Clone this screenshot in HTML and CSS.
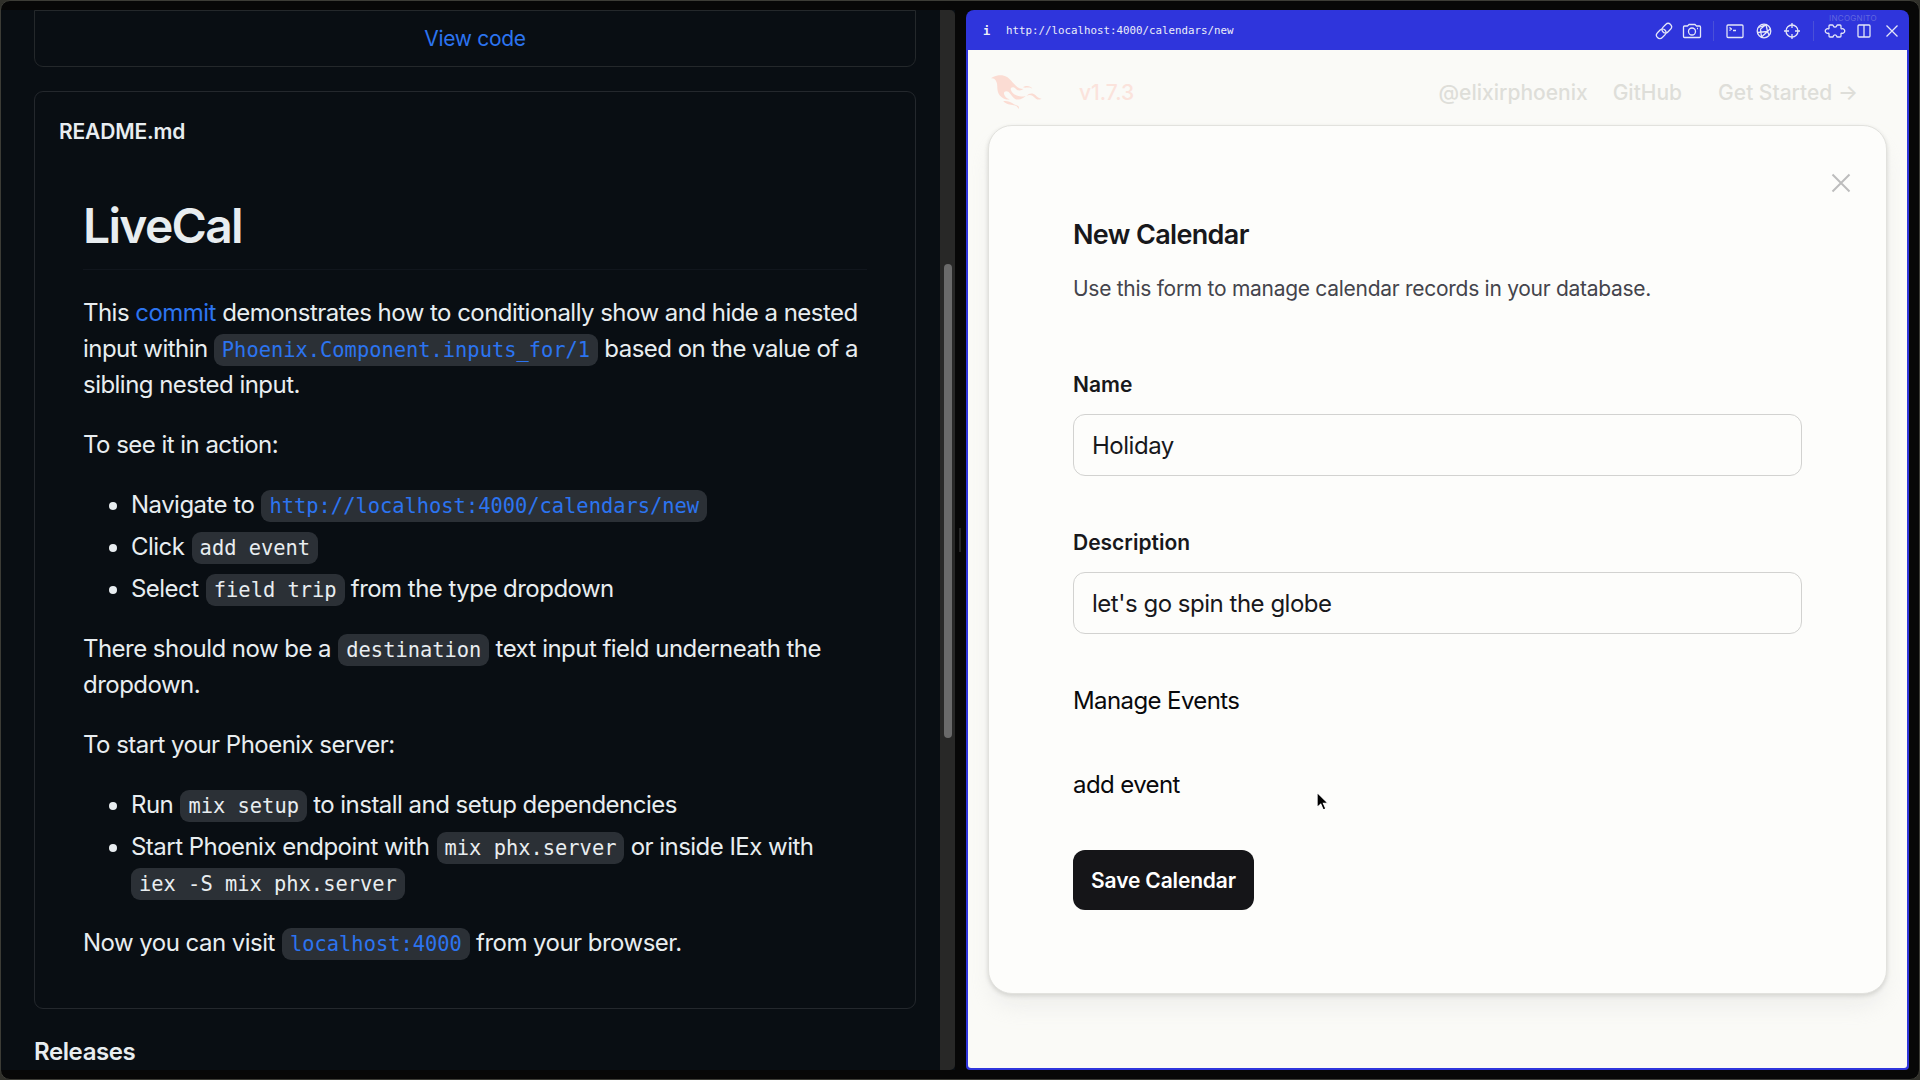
FILE: index.html
```html
<!DOCTYPE html>
<html lang="en">
<head>
<meta charset="utf-8">
<title>LiveCal</title>
<link rel="stylesheet" href="styles.css">
</head>
<body>
<div class="desktop">
  <section class="repo">
    <div class="repo-content">
      <div class="files-box"><a class="link">View code</a></div>
      <article class="readme">
        <h2 class="readme-name">README.md</h2>
        <div class="markdown">
          <h1>LiveCal</h1>
          <p>This <a class="link">commit</a> demonstrates how to conditionally show and hide a nested<br>input within <code class="link">Phoenix.Component.inputs_for/1</code> based on the value of a<br>sibling nested input.</p>
          <p>To see it in action:</p>
          <ul>
            <li>Navigate to <code class="link">http://localhost:4000/calendars/new</code></li>
            <li>Click <code>add event</code></li>
            <li>Select <code>field trip</code> from the type dropdown</li>
          </ul>
          <p>There should now be a <code>destination</code> text input field underneath the<br>dropdown.</p>
          <p>To start your Phoenix server:</p>
          <ul>
            <li>Run <code>mix setup</code> to install and setup dependencies</li>
            <li>Start Phoenix endpoint with <code>mix phx.server</code> or inside IEx with<br><code>iex -S mix phx.server</code></li>
          </ul>
          <p>Now you can visit <code class="link">localhost:4000</code> from your browser.</p>
        </div>
      </article>
      <h2 class="releases">Releases</h2>
    </div>
    <div class="scrollbar"><div class="thumb"></div></div>
  </section>
  <div class="splitter"><i></i></div>
  <section class="browser">
    <header class="toolbar">
      <span class="info">i</span>
      <span class="url">http://localhost:4000/calendars/new</span>
      <span class="incognito">INCOGNITO</span>
      <div class="tools">
        <svg class="icon" viewBox="0 0 20 20"><g transform="rotate(-45 10 10)"><rect x="0.800" y="6.600" width="10.500" height="6.800" rx="3.400"/><rect x="8.700" y="6.600" width="10.500" height="6.800" rx="3.400"/></g></svg>
        <svg class="icon" viewBox="0 0 20 20"><path d="M2.500 5h3l1.500-1.500h6l1.500 1.500h3q1 0 1 1v9.500q0 1-1 1h-15q-1 0-1-1V6q0-1 1-1z"/><circle cx="10" cy="10.500" r="3.500"/><path d="M15 7.500h1"/></svg>
        <i class="rule"></i>
        <svg class="icon" viewBox="0 0 20 20"><rect x="2" y="4" width="16" height="12.500" rx="1"/><path d="M4.500 6.500l2 1.500-2 1.500M8 9.500h3"/></svg>
        <svg class="icon" viewBox="0 0 20 20"><circle cx="10" cy="10" r="6.800"/><path d="M4.500 6.500l7.500-3 1.500 7-6 5.500-1-8M3.500 11.500l10-1 3-3M13.500 10.500l1.500 3.500M12 3.500l-5.500 4.500"/></svg>
        <svg class="icon" viewBox="0 0 20 20"><circle cx="10" cy="10" r="6"/><path d="M10 2v5M10 13v5M2 10h5M13 10h5"/></svg>
        <i class="rule"></i>
        <svg class="icon puzzle" viewBox="0 0 20 20"><path d="M5 4h2.500q.7 0 .9 1a1.700 1.700 0 0 0 3.200 0q.2-1 .9-1H15q1 0 1 1v2.300q0 .6.800.5a2.300 2.300 0 1 1 0 4.400q-.8-.1-.8.500V15q0 1-1 1h-2.500q-.7 0-.9-1a1.700 1.700 0 0 0-3.200 0q-.2 1-.9 1H5q-1 0-1-1v-2.300q0-.6-.8-.5a2.300 2.300 0 1 1 0-4.400q.8.1.8-.5V5q0-1 1-1z"/></svg>
        <svg class="icon" viewBox="0 0 20 20"><rect x="4" y="4" width="12" height="12" rx="1"/><path d="M10 4v12"/></svg>
        <svg class="icon" viewBox="0 0 20 20"><path d="M4.500 4.500l11 11M15.500 4.500l-11 11"/></svg>
      </div>
    </header>
    <div class="page">
      <nav class="site-nav">
        <svg class="logo" viewBox="0 0 71 48"><path d="m26.371 33.477-.552-.1c-3.920-.729-6.397-3.100-7.570-6.829-.733-2.324.597-4.035 3.035-4.148 1.995-.092 3.362 1.055 4.570 2.390 1.557 1.720 2.984 3.558 4.514 5.305 2.202 2.515 4.797 4.134 8.347 3.634 3.183-.448 5.958-1.725 8.371-3.828.363-.316.761-.592 1.144-.886l-.241-.284c-2.027.630-4.093.841-6.205.735-3.195-.160-6.240-.828-8.964-2.582-2.486-1.601-4.319-3.746-5.190-6.611-.704-2.315.736-3.934 3.135-3.600.948.133 1.746.560 2.463 1.165.583.493 1.143 1.015 1.738 1.493 2.800 2.250 6.712 2.375 10.265-.068-5.842-.026-9.817-3.240-13.308-7.313-1.366-1.594-2.700-3.216-4.095-4.785-2.698-3.036-5.692-5.710-9.790-6.623C12.800-.623 7.745.140 2.893 2.361 1.926 2.804.997 3.319 0 4.149c.494 0 .763.006 1.032 0 2.446-.064 4.280 1.023 5.602 3.024.962 1.457 1.415 3.104 1.761 4.798.513 2.515.247 5.078.544 7.605.761 6.494 4.080 11.026 10.260 13.346 2.267.852 4.591 1.135 7.172.555ZM37.200 42.300c-2.700-.500-4.900-1.400-6.800-2.900-4-3.100-8.600-4.200-13.400-3.400 4.300 4.700 9.600 5.300 14.800 5.800 3.200.300 5.100 2 6.600 5.200.900-2.300.600-3.700-1.200-4.700ZM50.200 17.100c2.900-.400 4.900-.200 7.400 1.500-2.600-3.900-8.800-5.100-13.200-1.800 1.900.6 3.800.6 5.800.300ZM49.500 28.800c4.100-2.900 8.500-1.300 11.500 2.500 2.400 3 5.400 3.200 9.500 1.300-4.200-.1-6.100-2.100-8.400-4.600-3.600-3.800-9.300-3.500-12.600.8Z"/></svg>
        <span class="version">v1.7.3</span>
        <div class="site-links"><a>@elixirphoenix</a><a>GitHub</a><a class="start">Get Started →</a></div>
      </nav>
      <main class="modal">
        <svg class="close" viewBox="0 0 20 20"><path d="M1.500 1.500l17 17M18.500 1.500l-17 17"/></svg>
        <h1 class="title">New Calendar</h1>
        <p class="subtitle">Use this form to manage calendar records in your database.</p>
        <label>Name</label>
        <div class="input">Holiday</div>
        <label>Description</label>
        <div class="input">let's go spin the globe</div>
        <div class="row">Manage Events</div>
        <div class="row add">add event</div>
        <button>Save Calendar</button>
      </main>
    </div>
  </section>
  <svg class="cursor" viewBox="0 0 12 19"><path d="M1 1v14l3.400-3 2.300 5.300 2.400-1-2.300-5.200H11z"/></svg>
</div>
</body>
</html>
```
FILE: styles.css
```css
* { box-sizing: border-box; }
body { margin: 0; background: #30302a; font-family: Inter, "Noto Sans", sans-serif; }
h1, h2, p, ul { margin: 0; padding: 0; }
.desktop { position: relative; display: flex; width: 1920px; height: 1080px; padding: 9px 10px 9px 0; overflow: hidden; background: #070707; border: 1px solid #3c3c36; border-radius: 10px; }

.repo { display: flex; width: 954px; flex: none; background: #090e13; }
.repo-content { width: 939px; padding: 0 24px 0 33px; }
.files-box { display: flex; align-items: center; justify-content: center; height: 57px; border: 1px solid #24282b; border-radius: 0 0 9px 9px; font-size: 21px; letter-spacing: -0.3px; }
.link { color: #2c74f0; }
.readme { height: 918px; margin-top: 24px; border: 1px solid #24282d; border-radius: 9px; color: #e8edf0; }
.readme-name { height: 80px; padding: 24px; font-size: 21px; line-height: 32px; font-weight: 600; letter-spacing: -0.15px; }
.markdown { padding: 24px 0 0 48px; font-size: 24px; line-height: 36px; letter-spacing: -0.53px; white-space: nowrap; }
.markdown h1 { width: 784px; height: 74px; margin-bottom: 25px; border-bottom: 1px solid #11161d; font-size: 48px; line-height: 60px; font-weight: 600; letter-spacing: -1.7px; }
.markdown p, .markdown ul { margin-bottom: 24px; }
.markdown ul { padding-left: 48px; }
.markdown li + li { margin-top: 6px; }
code { margin-left: 1px; padding: 4px 8px; border-radius: 9px; background: #2b3036; font: 20.4px "DejaVu Sans Mono", monospace; letter-spacing: 0; }
br + code { margin-left: 0; }
.releases { margin-top: 25px; color: #e8edf0; font-size: 24px; line-height: 36px; font-weight: 600; letter-spacing: -0.4px; }
.scrollbar { width: 15px; padding: 254px 3px 0 4px; background: #282827; border-radius: 0 5px 5px 0; }
.thumb { height: 474px; border-radius: 4px; background: #6a6a6a; }
.splitter { display: flex; width: 11px; flex: none; align-items: center; justify-content: center; }
.splitter i { width: 2px; height: 24px; margin-right: 2px; background: #262626; }

.browser { display: flex; flex: 1; flex-direction: column; overflow: hidden; background: #2f35dc; border-radius: 8px 8px 4px 4px; }
.toolbar { position: relative; display: flex; height: 40px; flex: none; align-items: center; padding: 1px 7px 0 17px; color: #eceef8; font: 12px "DejaVu Sans Mono", monospace; }
.info { width: 23px; font-weight: bold; }
.url { font-size: 10.8px; }
.incognito { position: absolute; top: 3px; right: 32px; color: #6267df; font: 8px Inter, sans-serif; letter-spacing: 0.3px; }
.tools { display: flex; flex: 1; align-items: center; justify-content: flex-end; gap: 8.5px; }
.icon { width: 20px; height: 20px; fill: none; stroke: #e4e6f8; stroke-width: 1.3; stroke-linejoin: round; }
.puzzle { overflow: visible; }
.rule { width: 1px; height: 20px; margin: 0 2.5px; background: #4a50d8; }
.page { display: flex; flex: 1; flex-direction: column; margin: 0 2px 2px; padding: 0 20px; background: #fafaf7; border-radius: 0 0 3px 3px; }
.site-nav { display: flex; height: 75px; align-items: center; padding: 10px 29px 0 3px; color: #deded9; font-size: 21px; font-weight: 500; }
.logo { width: 51px; height: 35px; fill: #fbdcd3; }
.version { margin-left: 37px; color: #fbe3dc; }
.site-links { display: flex; flex: 1; justify-content: flex-end; gap: 25px; }
.start { margin-left: 11px; }
.modal { position: relative; height: 869px; padding: 90px 84px 0; background: #fdfdfb; border: 1px solid #e2e2de; border-radius: 24px; box-shadow: 0 15px 24px -6px #d8d8d466, 0 2px 4px #d4d4d0; color: #18181b; }
.close { position: absolute; top: 47px; right: 35px; width: 20px; height: 20px; fill: none; stroke: #bdbdbd; stroke-width: 2; }
.title { font-size: 27px; line-height: 38px; font-weight: 600; letter-spacing: -0.65px; }
.subtitle { margin: 17px 0 60px; color: #44444c; font-size: 21px; line-height: 36px; letter-spacing: -0.28px; }
label { display: block; height: 36px; margin-bottom: 11px; font-size: 21px; line-height: 36px; font-weight: 600; }
.input { height: 62px; margin-bottom: 49px; padding: 1px 18px 0; border: 1px solid #d2d2d0; border-radius: 12px; font-size: 24px; line-height: 60px; letter-spacing: -0.48px; }
.row { height: 36px; font-size: 24px; line-height: 36px; letter-spacing: -0.6px; color: #09090b; }
.add { margin: 48px 0 47px; }
button { height: 60px; width: 181px; padding: 0; border: 0; border-radius: 12px; background: #151518; color: #fff; font: 600 21px Inter, sans-serif; letter-spacing: -0.15px; }
.cursor { position: absolute; left: 1315px; top: 790px; width: 13px; height: 21px; fill: #000; stroke: #fff; stroke-width: 1; }
```
